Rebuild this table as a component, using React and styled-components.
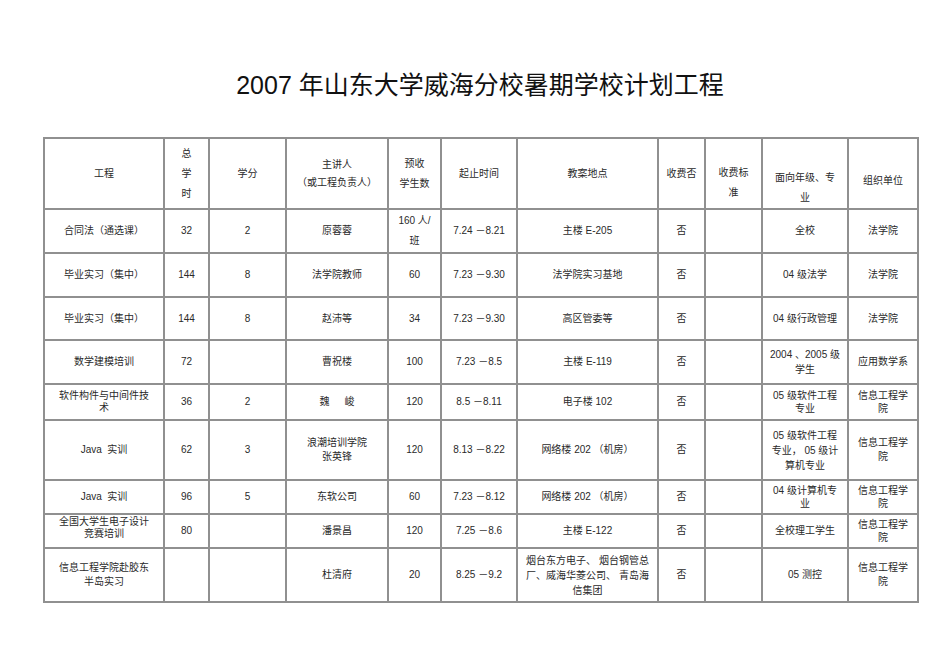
import React from 'react';
import styled, { createGlobalStyle } from 'styled-components';

const GlobalStyle = createGlobalStyle`
  body {
    margin: 0;
    background: #fff;
    font-family: "Liberation Sans", "Noto Sans CJK SC", sans-serif;
  }
`;

const Page = styled.div`
  width: 950px;
  height: 672px;
  padding: 70px 0 0 43px;
  box-sizing: border-box;
`;

const Sheet = styled.div`
  width: 874px;
`;

const Title = styled.h1`
  margin: 0 0 37px;
  font-size: 25px;
  line-height: 30px;
  font-weight: 400;
  text-align: center;
  color: #111;
`;

const Table = styled.table`
  width: 874px;
  border-collapse: collapse;
  table-layout: fixed;
  border: 2px solid #8a8a8a;
  border-bottom-color: #5a5a5a;
`;

const Col = styled.col`
  width: ${p => p.$w}px;
`;

const Row = styled.tr`
  height: ${p => p.$h}px;
`;

const Cell = styled.td`
  border: 2px solid #909090;
  padding: ${p => p.$down || 0}px 2px ${p => p.$up || 0}px;
  text-align: center;
  vertical-align: middle;
  font-size: 10px;
  line-height: ${p => p.$lh || 14}px;
  color: #2a2a2a;
  white-space: pre-line;
  overflow: hidden;
`;

const HeadCell = styled(Cell).attrs({ as: 'th' })`
  font-weight: 400;
  line-height: ${p => p.$lh || 20}px;
`;

const widths = [120, 45, 77, 102, 53, 76, 141, 47, 57, 86, 70];

const header = [
  '工程',
  '总\n学\n时',
  '学分',
  { t: '主讲人\n（或工程负责人）', lh: 18 },
  '预收\n学生数',
  '起止时间',
  '教案地点',
  '收费否',
  { t: '收费标\n准', down: 18 },
  { t: '面向年级、专\n业', down: 28 },
  { t: '组织单位', down: 14 },
];

const rows = [
  {
    h: 44,
    cells: ['合同法（通选课）', '32', '2', '原蓉蓉', { t: '160 人/\n班', lh: 20 }, '7.24 －8.21', '主楼  E-205', '否', '', '全校', '法学院'],
  },
  {
    h: 44,
    cells: ['毕业实习（集中）', '144', '8', '法学院教师', '60', '7.23  －9.30', '法学院实习基地', '否', '', '04 级法学', '法学院'],
  },
  {
    h: 43,
    cells: ['毕业实习（集中）', '144', '8', '赵沛等', '34', '7.23  －9.30', '高区管委等', '否', '', '04 级行政管理', '法学院'],
  },
  {
    h: 44,
    cells: ['数学建模培训', '72', '', '曹祝楼', '100', '7.23 －8.5', '主楼  E-119', '否', '', { t: '2004 、2005  级\n学生', lh: 15 }, '应用数学系'],
  },
  {
    h: 36,
    cells: [{ t: '软件构件与中间件技\n术', lh: 12 }, '36', '2', '魏\u3000\u2002峻', '120', '8.5 －8.11', '电子楼  102', '否', '', { t: '05 级软件工程\n专业', lh: 13 }, { t: '信息工程学\n院', lh: 13 }],
  },
  {
    h: 60,
    cells: ['Java\u00a0 实训', '62', '3', '浪潮培训学院\n张英锋', '120', '8.13 －8.22', '网络楼  202 （机房）', '否', '', { t: '05 级软件工程\n专业， 05 级计\n算机专业', lh: 15 }, '信息工程学\n院'],
  },
  {
    h: 34,
    cells: ['Java\u00a0 实训', '96', '5', '东软公司', '60', '7.23 －8.12', '网络楼  202 （机房）', '否', '', { t: '04 级计算机专\n业', lh: 13 }, { t: '信息工程学\n院', lh: 13 }],
  },
  {
    h: 34,
    cells: [{ t: '全国大学生电子设计\n竞赛培训', lh: 12, up: 6 }, '80', '', '潘景昌', '120', '7.25 －8.6', '主楼  E-122', '否', '', '全校理工学生', { t: '信息工程学\n院', lh: 13 }],
  },
  {
    h: 54,
    cells: ['信息工程学院赴胶东\n半岛实习', '', '', '杜清府', '20', '8.25 －9.2', { t: '烟台东方电子、 烟台钢管总\n厂、威海华菱公司、 青岛海\n信集团', lh: 15 }, '否', '', '05 测控', '信息工程学\n院'],
  },
];

const norm = c => (typeof c === 'string' ? { t: c } : c);

export default function App() {
  return (
    <Page>
      <GlobalStyle />
      <Sheet>
        <Title>2007 年山东大学威海分校暑期学校计划工程</Title>
        <Table>
          <colgroup>
            {widths.map((w, i) => (
              <Col key={i} $w={w} />
            ))}
          </colgroup>
          <thead>
            <Row $h={71}>
              {header.map(norm).map((c, i) => (
                <HeadCell key={i} $lh={c.lh} $down={c.down}>
                  {c.t}
                </HeadCell>
              ))}
            </Row>
          </thead>
          <tbody>
            {rows.map((r, ri) => (
              <Row key={ri} $h={r.h}>
                {r.cells.map(norm).map((c, i) => (
                  <Cell key={i} $lh={c.lh} $down={c.down} $up={c.up}>
                    {c.t}
                  </Cell>
                ))}
              </Row>
            ))}
          </tbody>
        </Table>
      </Sheet>
    </Page>
  );
}
